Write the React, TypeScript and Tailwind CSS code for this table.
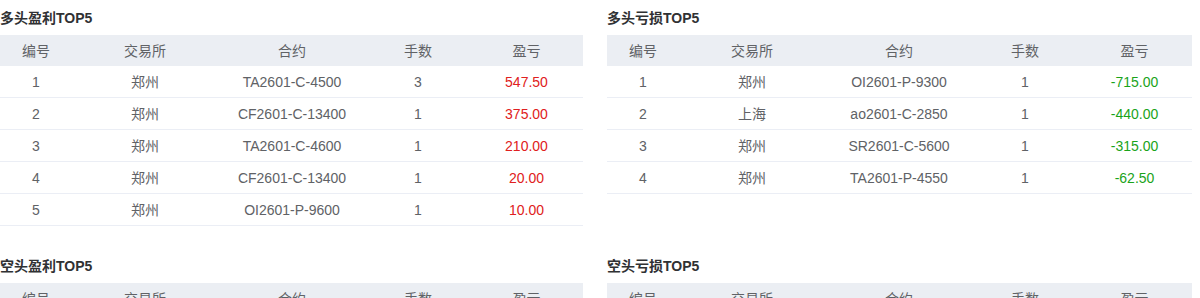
import React from 'react';

interface Trade {
    no: number;
    exchange: string;
    contract: string;
    lots: number;
    pnl: string;
}

interface Section {
    title: string;
    trades: Trade[];
}

const sections: Section[] = [
    {
        title: '多头盈利TOP5',
        trades: [
            { no: 1, exchange: '郑州', contract: 'TA2601-C-4500', lots: 3, pnl: '547.50' },
            { no: 2, exchange: '郑州', contract: 'CF2601-C-13400', lots: 1, pnl: '375.00' },
            { no: 3, exchange: '郑州', contract: 'TA2601-C-4600', lots: 1, pnl: '210.00' },
            { no: 4, exchange: '郑州', contract: 'CF2601-C-13400', lots: 1, pnl: '20.00' },
            { no: 5, exchange: '郑州', contract: 'OI2601-P-9600', lots: 1, pnl: '10.00' },
        ],
    },
    {
        title: '多头亏损TOP5',
        trades: [
            { no: 1, exchange: '郑州', contract: 'OI2601-P-9300', lots: 1, pnl: '-715.00' },
            { no: 2, exchange: '上海', contract: 'ao2601-C-2850', lots: 1, pnl: '-440.00' },
            { no: 3, exchange: '郑州', contract: 'SR2601-C-5600', lots: 1, pnl: '-315.00' },
            { no: 4, exchange: '郑州', contract: 'TA2601-P-4550', lots: 1, pnl: '-62.50' },
        ],
    },
    { title: '空头盈利TOP5', trades: [] },
    { title: '空头亏损TOP5', trades: [] },
];

const cols = 'grid grid-cols-[72px_146px_148px_104px_1fr]';

const TradeTable = ({ section }: { section: Section }) => (
    <div>
        <div className="h-[35px] flex items-center text-sm font-bold text-[#303133]">{section.title}</div>
        <div className={`${cols} h-[31px] items-center bg-[#ebeef3] text-sm text-[#606266] text-center`}>
            <div>编号</div>
            <div>交易所</div>
            <div>合约</div>
            <div>手数</div>
            <div>盈亏</div>
        </div>
        {section.trades.map((t) => (
            <div
                key={t.no}
                className={`${cols} h-[32px] items-center border-b border-[#ebeef5] text-sm text-[#606266] text-center`}
            >
                <div>{t.no}</div>
                <div>{t.exchange}</div>
                <div>{t.contract}</div>
                <div>{t.lots}</div>
                <div className={t.pnl.startsWith('-') ? 'text-[#1aa31a]' : 'text-[#e02020]'}>{t.pnl}</div>
            </div>
        ))}
    </div>
);

export default function App() {
    return (
        <div
            className="w-[1200px] h-[298px] overflow-hidden bg-white"
            style={{ fontFamily: '"Liberation Sans", Arial, "Noto Sans CJK SC", sans-serif' }}
        >
            <div className="grid grid-cols-[583px_585px] gap-x-6 gap-y-[22px]">
                {sections.map((s) => (
                    <TradeTable key={s.title} section={s} />
                ))}
            </div>
        </div>
    );
}
